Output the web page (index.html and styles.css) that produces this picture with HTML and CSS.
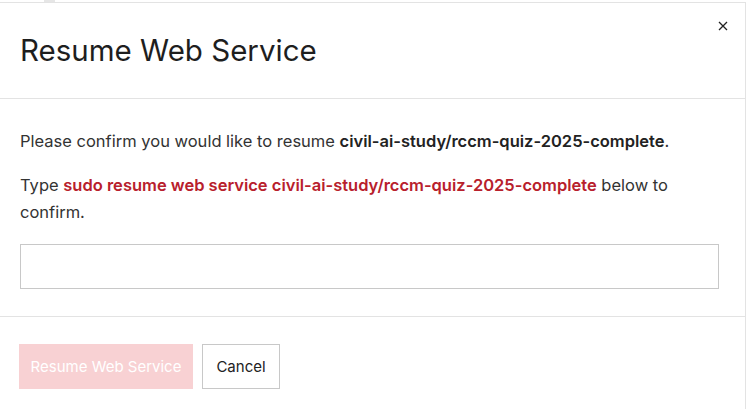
FILE: index.html
```html
<!DOCTYPE html>
<html>
<head>
<meta charset="utf-8">
<link rel="stylesheet" href="styles.css">
</head>
<body>
<div class="page">
  <div class="tab"></div>
  <div class="modal">
    <div class="modal-header">
      <h1 class="title">Resume Web Service</h1>
      <button class="close" aria-label="Close">
        <svg width="10" height="10" viewBox="0 0 10 10"><path d="M1 1L9 9M9 1L1 9" stroke="#222" stroke-width="1.3" fill="none"/></svg>
      </button>
    </div>
    <div class="modal-body">
      <p class="line">Please confirm you would like to resume <strong>civil-ai-study/rccm-quiz-2025-complete</strong>.</p>
      <p class="line">Type <span class="cmd">sudo resume web service civil-ai-study/rccm-quiz-2025-complete</span> below to confirm.</p>
      <input class="confirm-input" type="text">
    </div>
    <div class="modal-footer">
      <button class="btn btn-primary">Resume Web Service</button>
      <button class="btn btn-secondary">Cancel</button>
    </div>
  </div>
</div>
</body>
</html>
```
FILE: styles.css
```css
* { box-sizing: border-box; }
html, body { margin: 0; padding: 0; background: #fff; }
body { font-family: Inter, "Liberation Sans", sans-serif; color: #2a2a2a; }
.page { position: relative; width: 750px; height: 409px; overflow: hidden; padding-top: 2px; }
.tab { position: absolute; left: 44px; top: 0; width: 11px; height: 2px; background: #e6e6e6; }
.modal { width: 746px; height: 420px; border-top: 1px solid #e3e3e3; border-right: 1px solid #e3e3e3; background: #fff; }
.modal-header { height: 96px; border-bottom: 1px solid #e3e3e3; display: flex; align-items: center; justify-content: space-between; padding: 0 14px 0 20px; position: relative; }
.title { margin: 0; font-size: 29.5px; font-weight: 400; color: #1e1e1e; letter-spacing: 0; padding-bottom: 2px; }
.close { position: absolute; right: 16px; top: 17px; background: none; border: 0; padding: 0; width: 12px; height: 12px; display: flex; align-items: center; justify-content: center; }
.modal-body { padding: 29px 20px 27px 20px; border-bottom: 1px solid #e3e3e3; }
.line { margin: 0 0 17px 0; font-size: 16.5px; line-height: 27px; color: #333; }
.line strong { font-weight: 600; color: #222; }
.cmd { color: #b8202c; font-weight: 600; }
.confirm-input { display: block; width: 699px; height: 45px; border: 1px solid #c8c8c8; margin-top: 18px; font-size: 16px; padding: 0 12px; font-family: inherit; }
.modal-footer { display: flex; gap: 9px; padding: 27px 19px; }
.btn { height: 45px; font-family: inherit; font-size: 15px; padding: 0 8px; border-radius: 0; white-space: nowrap; }
.btn-primary { background: #f8d1d3; color: #fff; border: 0; width: 174px; }
.btn-secondary { background: #fff; color: #222; border: 1px solid #c8c8c8; width: 78px; }
```
